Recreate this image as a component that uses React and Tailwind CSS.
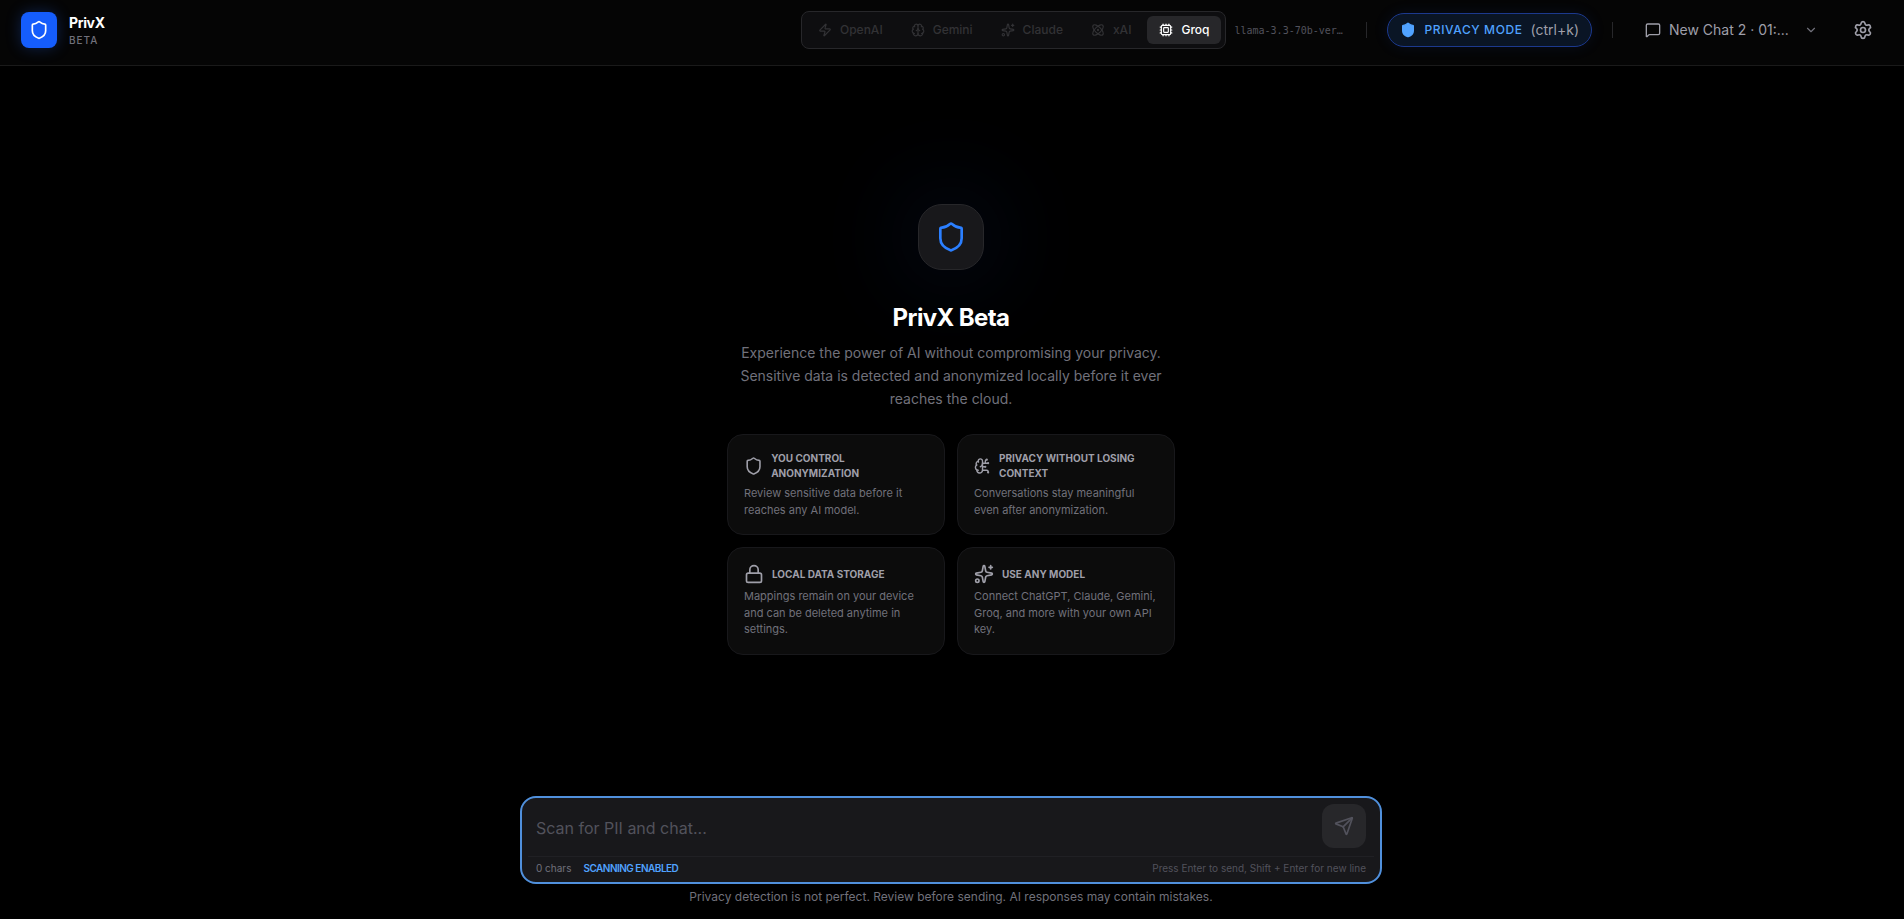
import {
  Atom,
  Brain,
  BrainCircuit,
  ChevronDown,
  Cpu,
  Lock,
  MessageSquare,
  Send,
  Settings,
  Shield,
  Sparkles,
  Zap,
} from "lucide-react";

const providers = [
  { id: "openai", label: "OpenAI", icon: Zap },
  { id: "gemini", label: "Gemini", icon: Brain },
  { id: "claude", label: "Claude", icon: Sparkles },
  { id: "xai", label: "xAI", icon: Atom },
  { id: "groq", label: "Groq", icon: Cpu },
];

const features = [
  {
    icon: Shield,
    title: "You control anonymization",
    text: "Review sensitive data before it reaches any AI model.",
  },
  {
    icon: BrainCircuit,
    title: "Privacy without losing context",
    text: "Conversations stay meaningful even after anonymization.",
  },
  {
    icon: Lock,
    title: "Local data storage",
    text: "Mappings remain on your device and can be deleted anytime in settings.",
  },
  {
    icon: Sparkles,
    title: "Use any model",
    text: "Connect ChatGPT, Claude, Gemini, Groq, and more with your own API key.",
  },
];

function Header({ active }) {
  return (
    <header className="h-[66px] shrink-0 flex items-start justify-between border-b border-[#1a1a1a] bg-[#050505] pt-[11px] pl-[21px] pr-[31px]">
      <div className="flex h-[38px] items-center gap-3">
        <div className="flex size-9 items-center justify-center rounded-lg bg-[#155dfc] shadow-[0_0_15px_rgba(37,99,235,0.3)]">
          <Shield size={20} className="text-white" />
        </div>
        <div>
          <h1 className="text-sm font-bold leading-5 tracking-tight text-white">
            PrivX
          </h1>
          <p className="text-[10px] font-medium uppercase leading-[15px] tracking-widest text-[#71717b]">
            Beta
          </p>
        </div>
      </div>

      <div className="flex h-[38px] items-center">
        <div className="flex gap-1 rounded-lg border border-[#27272a] bg-[#0e0e10] p-1">
          {providers.map(({ id, label, icon: Icon }) => (
            <button
              key={id}
              className={
                id === active
                  ? "flex h-7 items-center gap-2 rounded-md bg-[#27272a] px-3 text-xs font-medium text-white"
                  : "flex h-7 items-center gap-2 rounded-md px-3 text-xs font-medium text-[#323235]"
              }
            >
              <Icon size={14} />
              {label}
            </button>
          ))}
        </div>
        <span className="ml-2 w-[110px] whitespace-nowrap font-['DejaVu_Sans_Mono',monospace] text-[10px] text-[#52525c]">
          llama-3.3-70b-ver…
        </span>
        <div className="ml-[22px] h-4 w-px bg-[#27272a]" />
        <button className="ml-5 flex h-[34px] items-center gap-2 rounded-full border border-[#1c398e] bg-[#0a1525] px-3 shadow-[0_0_15px_rgba(37,99,235,0.1)]">
          <Shield size={16} className="fill-current text-[#50a2ff]" />
          <span className="text-xs font-medium uppercase tracking-wider text-[#50a2ff]">
            Privacy Mode
          </span>
          <span className="text-sm text-[#9f9fa9]">(ctrl+k)</span>
        </button>
        <div className="ml-5 h-4 w-px bg-[#27272a]" />
        <button className="ml-8 flex items-center gap-2 text-sm text-[#9f9fa9]">
          <MessageSquare size={16} />
          <span className="w-[127px] text-left">New Chat 2 · 01:...</span>
          <ChevronDown size={14} className="text-[#71717b]" />
        </button>
        <button className="ml-[35px] text-[#9f9fa9]">
          <Settings size={20} />
        </button>
      </div>
    </header>
  );
}

function FeatureCard({ icon: Icon, title, text }) {
  return (
    <div className="rounded-2xl border border-[#18181b] bg-[#0c0c0c] p-4">
      <div className="mb-1 flex items-center gap-2 text-[#9f9fa9]">
        <Icon size={20} />
        <h3 className="text-[10px] font-bold uppercase leading-[15px]">
          {title}
        </h3>
      </div>
      <p className="text-[11px] leading-[16.5px] text-[#71717b]">{text}</p>
    </div>
  );
}

function Welcome() {
  return (
    <main className="flex flex-1 flex-col items-center pt-[138px] pr-0.5">
      <div className="flex size-[66px] items-center justify-center rounded-3xl border border-[#27272a] bg-[#18181b] shadow-[0_0_100px_10px_rgba(37,99,235,0.13)]">
        <Shield size={32} className="text-[#2b7fff]" />
      </div>
      <h2 className="mt-8 text-2xl font-bold leading-8 tracking-tight text-white">
        PrivX Beta
      </h2>
      <p className="mt-2 w-[448px] text-center text-sm leading-[22.75px] text-[#71717b]">
        Experience the power of AI without compromising your privacy. Sensitive
        data is detected and anonymized locally before it ever reaches the
        cloud.
      </p>
      <div className="mt-6 grid w-[448px] grid-cols-2 gap-3">
        {features.map((feature) => (
          <FeatureCard key={feature.title} {...feature} />
        ))}
      </div>
    </main>
  );
}

function Composer() {
  return (
    <footer className="flex shrink-0 flex-col items-center pb-3.5 pr-0.5">
      <div className="h-[88px] w-[862px] rounded-2xl border-2 border-[#5090dc] bg-[#18181b] px-1.5 pt-1.5">
        <div className="flex h-[52px] items-start justify-between pl-2 pr-2">
          <textarea
            rows={1}
            placeholder="Scan for PII and chat..."
            className="mt-3 h-6 flex-1 resize-none bg-transparent text-base leading-6 text-white outline-none placeholder:text-[#52525c]"
          />
          <button className="flex size-11 items-center justify-center rounded-xl bg-[#27272a] text-[#52525c]">
            <Send size={20} />
          </button>
        </div>
        <div className="flex items-center justify-between border-t border-[#202024] px-2 pt-1 text-[10px] leading-[15px]">
          <div className="flex gap-3">
            <span className="text-[#71717b]">0 chars</span>
            <span className="font-semibold uppercase tracking-tighter text-[#50a2ff]">
              Scanning enabled
            </span>
          </div>
          <span className="text-[#52525c]">
            Press Enter to send, Shift + Enter for new line
          </span>
        </div>
      </div>
      <p className="mt-[5px] text-xs leading-4 text-[#71717b]">
        Privacy detection is not perfect. Review before sending. AI responses
        may contain mistakes.
      </p>
    </footer>
  );
}

export default function App() {
  return (
    <div className="flex h-screen flex-col bg-black font-['Inter',sans-serif]">
      <Header active="groq" />
      <Welcome />
      <Composer />
    </div>
  );
}
